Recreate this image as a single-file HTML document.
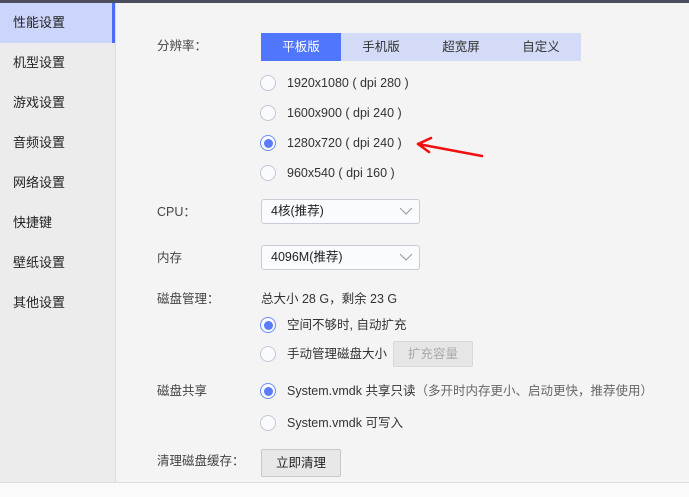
<!DOCTYPE html>
<html><head><meta charset="utf-8"><style>
body{margin:0;width:689px;height:496px;overflow:hidden;background:#f4f4f4;font-family:"Liberation Sans","Noto Sans CJK SC",sans-serif;font-size:12.5px;line-height:16px;color:#333;position:relative}
.top{position:absolute;left:0;top:0;width:689px;height:3px;background:#4b4e5c}
.side{position:absolute;left:0;top:3px;width:116px;height:480px;background:#ececec;border-right:1px solid #ddd;box-sizing:border-box}
.si{height:40px;line-height:40px;padding-left:13px;font-size:13px;color:#222}
.si.act{background:#ccd6fc;border-right:3px solid #4c6ef5}
.a{position:absolute;white-space:nowrap}
.lbl{color:#444}
.tabs{position:absolute;left:261px;top:33px;height:28px;display:flex;background:#d3dbf6}
.tab{width:80px;text-align:center;line-height:28px;color:#333}
.tab.on{background:#5176fe;color:#fff}
.r{position:absolute;width:16px;height:16px;border:1px solid #c4c8d6;border-radius:50%;background:#fafbff;box-sizing:border-box}
.r.on{border-color:#6d8bfa}
.r.on::after{content:"";position:absolute;left:2.5px;top:2.5px;width:9px;height:9px;border-radius:50%;background:#5a7cf9}
.sel{position:absolute;width:159px;height:25px;border:1px solid #c9ccd6;border-radius:3px;background:#fafbff;box-sizing:border-box;line-height:23px;padding-left:9px;color:#222}
.sel svg{position:absolute;right:7px;top:8px}
.btn{position:absolute;border:1px solid #c8c8c8;background:#e8e8e8;box-sizing:border-box;text-align:center;border-radius:2px}
.bottom{position:absolute;left:0;top:482px;width:689px;height:14px;background:#fafafa;border-top:1px solid #ddd}
</style></head><body>
<div class="top"></div>
<div class="side">
<div class="si act">性能设置</div><div class="si">机型设置</div><div class="si">游戏设置</div><div class="si">音频设置</div><div class="si">网络设置</div><div class="si">快捷键</div><div class="si">壁纸设置</div><div class="si">其他设置</div>
</div>
<div class="a lbl" style="left:157px;top:38px">分辨率：</div>
<div class="tabs"><div class="tab on">平板版</div><div class="tab">手机版</div><div class="tab">超宽屏</div><div class="tab">自定义</div></div>
<div class="r" style="left:260px;top:75px"></div><div class="a" style="left:287px;top:75px">1920x1080 ( dpi 280 )</div>
<div class="r" style="left:260px;top:105px"></div><div class="a" style="left:287px;top:105px">1600x900 ( dpi 240 )</div>
<div class="r on" style="left:260px;top:135px"></div><div class="a" style="left:287px;top:135px">1280x720 ( dpi 240 )</div>
<div class="r" style="left:260px;top:165px"></div><div class="a" style="left:287px;top:165px">960x540 ( dpi 160 )</div>
<svg class="a" style="left:410px;top:134px" width="80" height="28"><path d="M72 22 L8 10 M8 10 L21 4 M8 10 L19 18" stroke="#f01010" stroke-width="2.6" fill="none" stroke-linecap="round"/></svg>
<div class="a lbl" style="left:157px;top:204px">CPU：</div>
<div class="sel" style="left:261px;top:199px">4核(推荐)<svg width="12" height="7"><path d="M0 0L6 6L12 0" stroke="#999" fill="none"/></svg></div>
<div class="a lbl" style="left:157px;top:250px">内存</div>
<div class="sel" style="left:261px;top:245px">4096M(推荐)<svg width="12" height="7"><path d="M0 0L6 6L12 0" stroke="#999" fill="none"/></svg></div>
<div class="a lbl" style="left:157px;top:291px">磁盘管理：</div>
<div class="a" style="left:261px;top:291px">总大小 28 G，剩余 23 G</div>
<div class="r on" style="left:260px;top:317px"></div><div class="a" style="left:287px;top:317px">空间不够时, 自动扩充</div>
<div class="r" style="left:260px;top:346px"></div><div class="a" style="left:287px;top:346px">手动管理磁盘大小</div>
<div class="btn" style="left:393px;top:341px;width:80px;height:26px;line-height:24px;color:#aaa;background:#e6e6e6;border-color:#d8d8d8">扩充容量</div>
<div class="a lbl" style="left:157px;top:383px">磁盘共享</div>
<div class="r on" style="left:260px;top:383px"></div><div class="a" style="left:287px;top:383px">System.vmdk 共享只读<span style="color:#666">（多开时内存更小、启动更快，推荐使用）</span></div>
<div class="r" style="left:260px;top:415px"></div><div class="a" style="left:287px;top:415px">System.vmdk 可写入</div>
<div class="a lbl" style="left:157px;top:453px">清理磁盘缓存：</div>
<div class="btn" style="left:261px;top:449px;width:80px;height:28px;line-height:26px;color:#222">立即清理</div>
<div class="bottom"></div>
</body></html>
